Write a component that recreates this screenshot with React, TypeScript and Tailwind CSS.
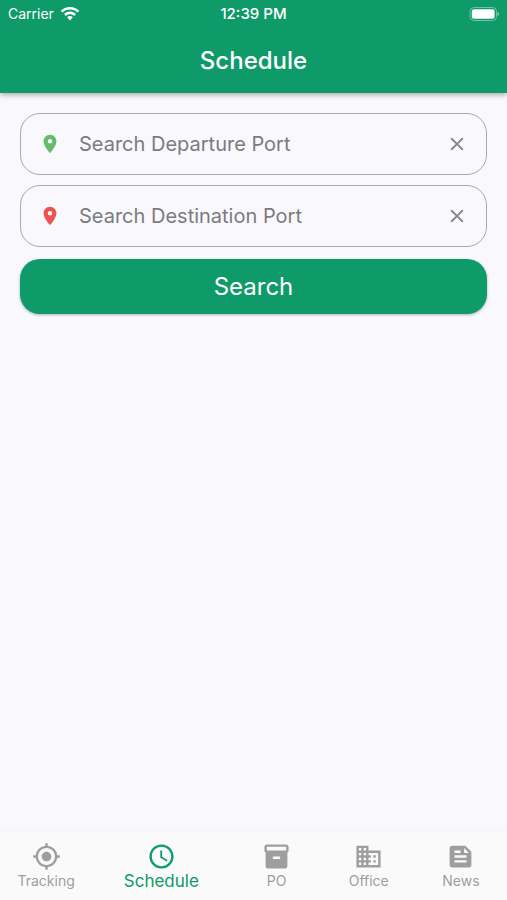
import { useState } from 'react';
import {
  MdClose,
  MdLocationOn,
  MdMyLocation,
  MdAccessTime,
  MdInventory2,
  MdBusiness,
  MdFeed,
} from 'react-icons/md';

const tabs = [
  { label: 'Tracking', icon: MdMyLocation },
  { label: 'Schedule', icon: MdAccessTime },
  { label: 'PO', icon: MdInventory2 },
  { label: 'Office', icon: MdBusiness },
  { label: 'News', icon: MdFeed },
];

function StatusBar() {
  return (
    <div className="grid h-7 grid-cols-3 items-center px-2 text-sm text-white">
      <div className="flex items-center gap-1.5">
        <span>Carrier</span>
        <svg viewBox="0 0 20 14" className="h-3.5 w-5 shrink-0" fill="currentColor">
          <path d="M10 0C6.400 0 3.100 1.400.700 3.700l1.800 1.900C4.400 3.700 7.100 2.600 10 2.600s5.600 1.100 7.500 3l1.800-1.900C16.900 1.400 13.600 0 10 0z" />
          <path d="M10 4.500c-2.300 0-4.400.9-6 2.500l1.900 1.900C7 7.800 8.400 7.200 10 7.200s3 .6 4.100 1.700L16 7c-1.600-1.600-3.700-2.500-6-2.500z" />
          <path d="M10 9c-1.100 0-2.100.5-2.800 1.200L10 13.500l2.800-3.300C12.100 9.500 11.100 9 10 9z" />
        </svg>
      </div>
      <span className="text-center text-[15px] font-medium">12:39 PM</span>
      <svg viewBox="0 0 30 14" className="h-3.5 w-[30px] justify-self-end">
        <rect x="1" y="0.500" width="26.500" height="13" rx="4" fill="none" stroke="#fff" strokeOpacity="0.4" />
        <rect x="2.800" y="2.300" width="22.800" height="9.400" rx="2.300" fill="#fff" />
        <path d="M28.500 5v4c1-.4 1.500-1.100 1.500-2s-.5-1.600-1.500-2z" fill="#fff" fillOpacity="0.5" />
      </svg>
    </div>
  );
}

interface PortFieldProps {
  label: string;
  pinClass: string;
}

function PortField({ label, pinClass }: PortFieldProps) {
  const [value, setValue] = useState('');

  return (
    <div className="flex h-[62px] items-center rounded-[20px] border border-[#a9a8ae] px-[18px]">
      <MdLocationOn className={`size-[22px] shrink-0 ${pinClass}`} />
      <input
        type="text"
        aria-label={label}
        placeholder={label}
        value={value}
        onChange={(e) => setValue(e.target.value)}
        className="ml-[18px] min-w-0 flex-1 bg-transparent text-xl text-gray-800 outline-none placeholder:text-[#7b7b7e]"
      />
      <button type="button" aria-label={`Clear ${label}`} onClick={() => setValue('')}>
        <MdClose className="size-[22px] text-[#838387]" />
      </button>
    </div>
  );
}

export default function App() {
  const [active, setActive] = useState('Schedule');

  return (
    <div className="flex min-h-screen flex-col bg-[#f8f8fd] font-['Inter',sans-serif]">
      <header className="bg-[#0e9a69] shadow-[0_2px_5px_rgba(0,0,0,0.3)]">
        <StatusBar />
        <h1 className="flex h-[65px] items-center justify-center text-2xl font-medium text-white">
          Schedule
        </h1>
      </header>

      <main className="flex-1 px-5 pt-5">
        <form onSubmit={(e) => e.preventDefault()}>
          <div className="space-y-2.5">
            <PortField label="Search Departure Port" pinClass="text-[#66bb6a]" />
            <PortField label="Search Destination Port" pinClass="text-[#ef5350]" />
          </div>
          <button
            type="submit"
            className="mt-3 h-[55px] w-full rounded-[20px] bg-[#0e9a69] text-2xl text-white shadow-[0_1px_3px_rgba(0,0,0,0.3)]"
          >
            Search
          </button>
        </form>
      </main>

      <nav className="flex h-[68px] bg-[#fafafa] shadow-[0_-1px_2px_rgba(0,0,0,0.02)]">
        {tabs.map(({ label, icon: Icon }) => (
          <button
            key={label}
            type="button"
            onClick={() => setActive(label)}
            className={`flex flex-col items-center pt-2.5 ${
              active === label
                ? 'flex-3 text-[17px] text-[#0e9a69]'
                : 'flex-2 text-sm text-[#9e9e9e]'
            }`}
          >
            <Icon className="size-[29px]" />
            <span className="leading-5">{label}</span>
          </button>
        ))}
      </nav>
    </div>
  );
}
